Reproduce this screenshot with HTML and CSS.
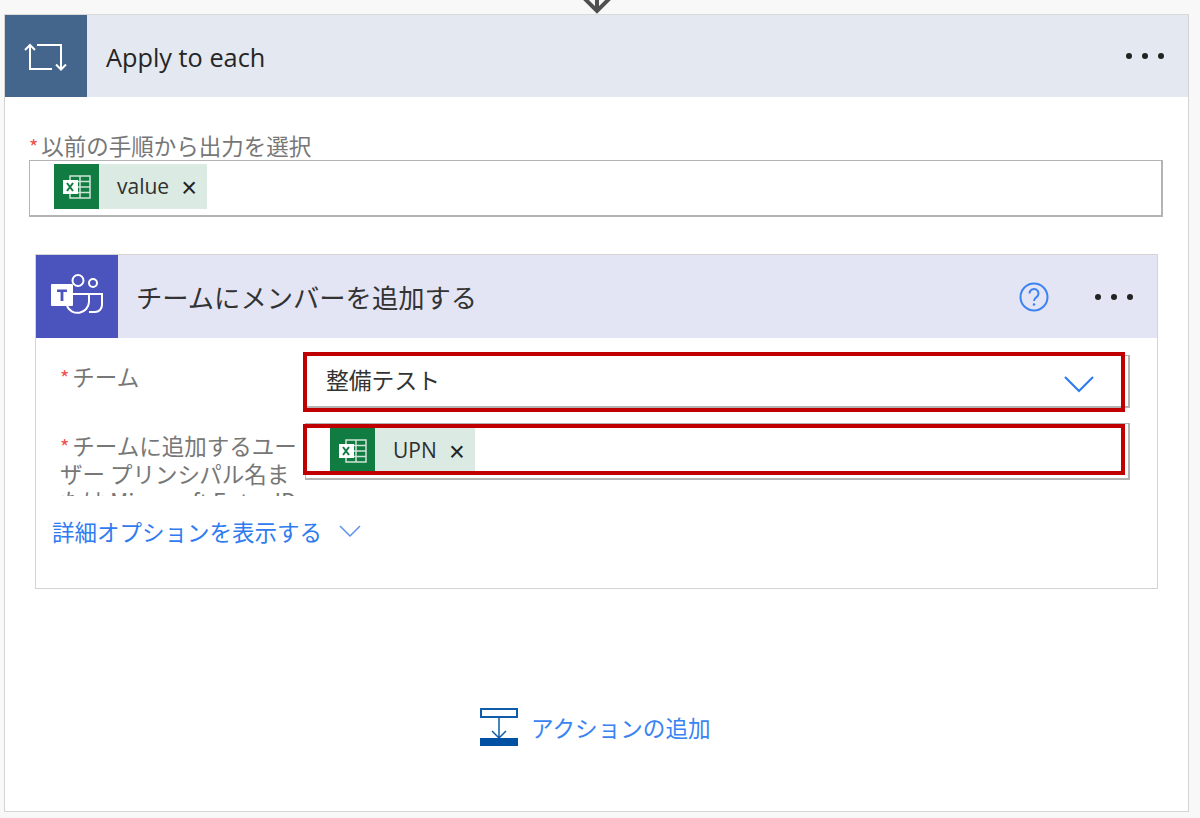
FILE: index.html
```html
<!DOCTYPE html>
<html lang="ja">
<head>
<meta charset="utf-8">
<title>Apply to each</title>
<link rel="stylesheet" href="styles.css">
</head>
<body>
<svg class="connector-arrow" width="30" height="14" viewBox="0 0 30 14"><path d="M15 0v11M2 -2l13 13L28 -2" fill="none" stroke="#505050" stroke-width="4"/></svg>
<main class="loop-card">
  <header class="loop-header">
    <div class="loop-icon">
      <svg class="loop-glyph" width="44" height="30" viewBox="0 0 44 30" fill="none" stroke="#fff" stroke-width="2"><path d="M6 28V3M1 8l5-5 5 5M5 27h23M13 3h24v24M32 22.500l5 5 5-5"/></svg>
    </div>
    <h1 class="loop-title">Apply to each</h1>
    <div class="dots"><i></i><i></i><i></i></div>
  </header>
  <section class="loop-body">
    <label class="field-label"><span class="req">*</span>以前の手順から出力を選択</label>
    <div class="token-input">
      <div class="token">
        <span class="token-icon"><svg width="30" height="26" viewBox="0 0 30 26"><use href="#xl"/></svg></span>
        <span class="token-text">value</span><span class="token-x">×</span>
      </div>
    </div>

    <article class="action-card">
      <header class="action-header">
        <div class="action-icon">
          <svg width="52" height="46" viewBox="0 0 52 46" fill="none"><circle cx="27" cy="6.500" r="5.500" stroke="#fff" stroke-width="2"/><circle cx="42" cy="9" r="4" stroke="#fff" stroke-width="2"/><path d="M37 20h14v11a7 7 0 0 1-7 7h-6" stroke="#fff" stroke-width="2"/><path d="M16 32a11.500 11.500 0 0 0 22-4V20H22" stroke="#fff" stroke-width="2"/><rect x="0" y="10" width="22" height="22" rx="1" fill="#fff"/><path d="M6 15.500h10v2.500h-3.600v9h-2.800v-9H6z" fill="#4b53bc"/></svg>
        </div>
        <h2 class="action-title">チームにメンバーを追加する</h2>
        <svg class="help" width="30" height="30" viewBox="0 0 30 30" fill="none"><circle cx="15" cy="15" r="13.500" stroke="#3d82f5" stroke-width="2"/><path d="M10.500 11.500a4.500 4.500 0 1 1 7 3.700c-1.600 1-2.500 1.800-2.500 3.800" stroke="#3d82f5" stroke-width="2"/><circle cx="15" cy="22.500" r="1.300" fill="#3d82f5"/></svg>
        <div class="dots"><i></i><i></i><i></i></div>
      </header>
      <div class="action-body">
        <div class="form-row">
          <label class="row-label team-label"><span class="req">*</span>チーム</label>
          <div class="row-input select-input">
            <span class="select-value">整備テスト</span>
            <svg class="select-chevron" width="30" height="18" viewBox="0 0 30 18" fill="none"><path d="M1 2l14 14L29 2" stroke="#2f7bf0" stroke-width="2.200"/></svg>
            <div class="highlight team-highlight"></div>
          </div>
        </div>
        <div class="form-row upn-row">
          <label class="row-label clipped"><span class="req">*</span>チームに追加するユーザー プリンシパル名または Microsoft Entra ID</label>
          <div class="row-input upn-input">
            <div class="token">
              <span class="token-icon"><svg width="30" height="26" viewBox="0 0 30 26"><use href="#xl"/></svg></span>
              <span class="token-text">UPN</span><span class="token-x">×</span>
            </div>
            <div class="highlight upn-highlight"></div>
          </div>
        </div>
        <a class="advanced">詳細オプションを表示する<svg width="22" height="13" viewBox="0 0 22 13" fill="none"><path d="M1 1l10 10L21 1" stroke="#5c92ea" stroke-width="1.500"/></svg></a>
      </div>
    </article>

    <div class="add-action">
      <svg width="38" height="38" viewBox="0 0 38 38" fill="none"><rect x="1" y="1" width="36" height="8" fill="#fff" stroke="#0f5ca8" stroke-width="2"/><path d="M19 9v21M12 23l7 7 7-7" stroke="#0f5ca8" stroke-width="1.500"/><rect y="30" width="38" height="8" fill="#0050a4"/></svg>
      <span>アクションの追加</span>
    </div>
  </section>
</main>
<svg class="defs" width="0" height="0"><defs><g id="xl"><path d="M8 2h20v22H8z" fill="none" stroke="#cfe5d8" stroke-width="1.500"/><path d="M18 2v22M8 7.500h20M8 13h20M8 18.500h20" stroke="#cfe5d8" stroke-width="1.500"/><rect x="1" y="6" width="15" height="14" fill="#fff"/><path d="M5 9l6 8M11 9l-6 8" stroke="#107c41" stroke-width="2"/></g></defs></svg>
</body>
</html>
```
FILE: styles.css
```css
* { box-sizing: border-box; }
html, body { margin: 0; height: 818px; overflow: hidden; }
body {
  position: relative;
  background: #f8f8f8;
  padding: 14px 11px 6px 4px;
  font-family: "Noto Sans CJK JP", "Noto Sans", sans-serif;
  color: #333;
}
.defs { position: absolute; }
.connector-arrow { position: absolute; left: 582px; top: 0; }
.loop-card { height: 798px; background: #fff; border: 1px solid #d4d4d4; border-top-color: #d9d9d6; }
.loop-header { display: flex; align-items: center; height: 82px; background: #e4e8f0; }
.loop-icon { width: 82px; height: 82px; background: #44658c; display: flex; align-items: center; justify-content: center; }
.loop-glyph { margin-top: 1px; }
.loop-title { flex: 1; margin: 4px 0 0 19px; font: 400 25.300px/1 "Open Sans", "Noto Sans", sans-serif; color: #252525; }
.dots { display: flex; gap: 10px; margin-right: 24px; }
.dots i { width: 6px; height: 6px; border-radius: 50%; background: #222; }
.loop-body { padding: 36px 25px 0 24px; position: relative; }
.field-label { display: block; height: 27px; font-size: 22.500px; line-height: 25px; color: #777; white-space: nowrap; }
.req { color: #f0504c; font-size: 20px; margin-right: 3px; }
.token-input { height: 57px; border: 1px solid #b4b4b4; border-width: 1px 2px 2px 1px; padding: 3px 0 0 24px; }
.token { display: inline-flex; align-items: center; height: 45px; background: #dbeae2; }
.token-icon { width: 45px; height: 45px; background: #107c41; display: flex; align-items: center; justify-content: center; }
.token-text { margin-left: 18px; font: 400 21px/1 "Open Sans", sans-serif; color: #303030; }
.token-x { margin: 4px 9px 0 11px; width: 18px; font: 400 27px/1 "Liberation Sans", sans-serif; color: #222; text-align: center; }
.action-card { margin: 37px 5px 0 6px; height: 335px; border: 1px solid #d4d4d4; }
.action-header { display: flex; align-items: center; height: 83px; background: #e4e5f4; }
.action-icon { width: 82px; height: 83px; background: #4b53bc; display: flex; align-items: center; justify-content: center; }
.action-title { flex: 1; margin: 0 0 0 18px; font-size: 26.300px; font-weight: 400; color: #333; }
.help { margin-right: 46px; }
.action-body { padding: 17px 27px 0 24px; }
.form-row { display: flex; }
.row-label { width: 245px; font-size: 22.500px; line-height: 27px; color: #777; flex: none; }
.team-label { margin-top: 8px; }
.clipped { height: 64px; overflow: hidden; margin-top: 9px; }
.row-input { position: relative; flex: 1; border: 1px solid #b4b4b4; border-width: 1px 2px 2px 1px; }
.select-input { height: 53px; display: flex; align-items: center; justify-content: space-between; padding: 0 34px 0 20px; font-size: 22.800px; color: #333; }
.select-value { margin-bottom: 4px; }
.select-chevron { margin-top: 5px; }
.upn-row { margin-top: 15px; height: 75px; }
.upn-input { height: 57px; padding: 4px 0 0 24px; }
.highlight { position: absolute; border: 4px solid #c00000; pointer-events: none; }
.team-highlight { left: -3px; top: -4px; right: 3px; height: 60px; }
.upn-highlight { left: -3px; top: 0; right: 3px; height: 51px; }
.advanced { display: flex; align-items: center; gap: 17px; margin: 13px 0 0 -8px; height: 40px; color: #2f7bf0; font-size: 22.500px; }
.add-action { position: absolute; left: 475px; top: 611px; display: flex; align-items: center; gap: 13px; color: #3a84f2; font-size: 22.600px; }
```
